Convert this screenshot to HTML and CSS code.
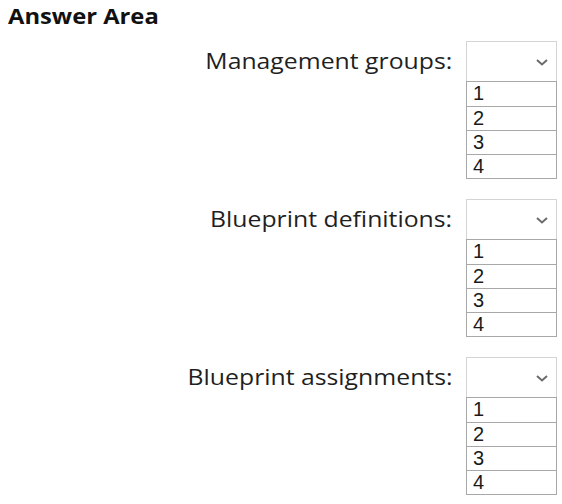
FILE: index.html
```html
<!DOCTYPE html>
<html lang="en">
<head>
<meta charset="UTF-8" />
<meta name="viewport" content="width=device-width, initial-scale=1.0" />
<title>Answer Area</title>
<link rel="stylesheet" href="styles.css">
</head>
<body>
  <h1 class="title"><span>Answer Area</span></h1>

  <div class="answers">
    <div class="answer-row">
      <div class="label"><span>Management groups:</span></div>
      <div class="picker">
        <div class="picker-head">
          <svg class="chevron" width="12" height="7" viewBox="0 0 12 7"><path d="M1 1 L6 5.5 L11 1" fill="none" stroke="#6b6b6b" stroke-width="2"/></svg>
        </div>
        <ul class="options">
          <li>1</li>
          <li>2</li>
          <li>3</li>
          <li>4</li>
        </ul>
      </div>
    </div>

    <div class="answer-row">
      <div class="label"><span>Blueprint definitions:</span></div>
      <div class="picker">
        <div class="picker-head">
          <svg class="chevron" width="12" height="7" viewBox="0 0 12 7"><path d="M1 1 L6 5.5 L11 1" fill="none" stroke="#6b6b6b" stroke-width="2"/></svg>
        </div>
        <ul class="options">
          <li>1</li>
          <li>2</li>
          <li>3</li>
          <li>4</li>
        </ul>
      </div>
    </div>

    <div class="answer-row">
      <div class="label"><span>Blueprint assignments:</span></div>
      <div class="picker">
        <div class="picker-head">
          <svg class="chevron" width="12" height="7" viewBox="0 0 12 7"><path d="M1 1 L6 5.5 L11 1" fill="none" stroke="#6b6b6b" stroke-width="2"/></svg>
        </div>
        <ul class="options">
          <li>1</li>
          <li>2</li>
          <li>3</li>
          <li>4</li>
        </ul>
      </div>
    </div>
  </div>
</body>
</html>
```

FILE: styles.css
```css
* {
  box-sizing: border-box;
}

body {
  margin: 0;
  background: #ffffff;
  color: #1a1a1a;
  font-family: "Open Sans", "Noto Sans", sans-serif;
}

.title {
  margin: 0;
  padding: 2px 0 0 8px;
  font-size: 22px;
  font-weight: 700;
  line-height: 27px;
  color: #111;
}

.title span {
  display: inline-block;
  transform: scaleX(1.08);
  transform-origin: left center;
}

.answers {
  display: flex;
  flex-direction: column;
  gap: 20px;
  padding: 12px 5px 0 0;
}

.answer-row {
  display: flex;
  justify-content: flex-end;
  align-items: flex-start;
  gap: 14px;
}

.label {
  height: 40px;
  display: flex;
  align-items: center;
  font-size: 21px;
  color: #1f1f1f;
}

/* the source capture is stretched sideways */
.label span {
  display: inline-block;
  transform: scaleX(1.18);
  transform-origin: right center;
}

.picker {
  width: 91px;
}

.picker-head {
  height: 40px;
  border: 1px solid #d4d4d4;
  border-bottom: none;
  display: flex;
  align-items: center;
  justify-content: flex-end;
  padding: 2px 8px 0 0;
}

.options {
  list-style: none;
  margin: 0;
  padding: 0;
  border: 1px solid #a8a8a8;
}

.options li {
  height: 24px;
  line-height: 23px;
  padding-left: 6px;
  font-family: "Liberation Sans", Arial, sans-serif;
  font-size: 20px;
  color: #1a1a1a;
  border-top: 1px solid #a8a8a8;
}

.options li:first-child {
  border-top: none;
}
```
